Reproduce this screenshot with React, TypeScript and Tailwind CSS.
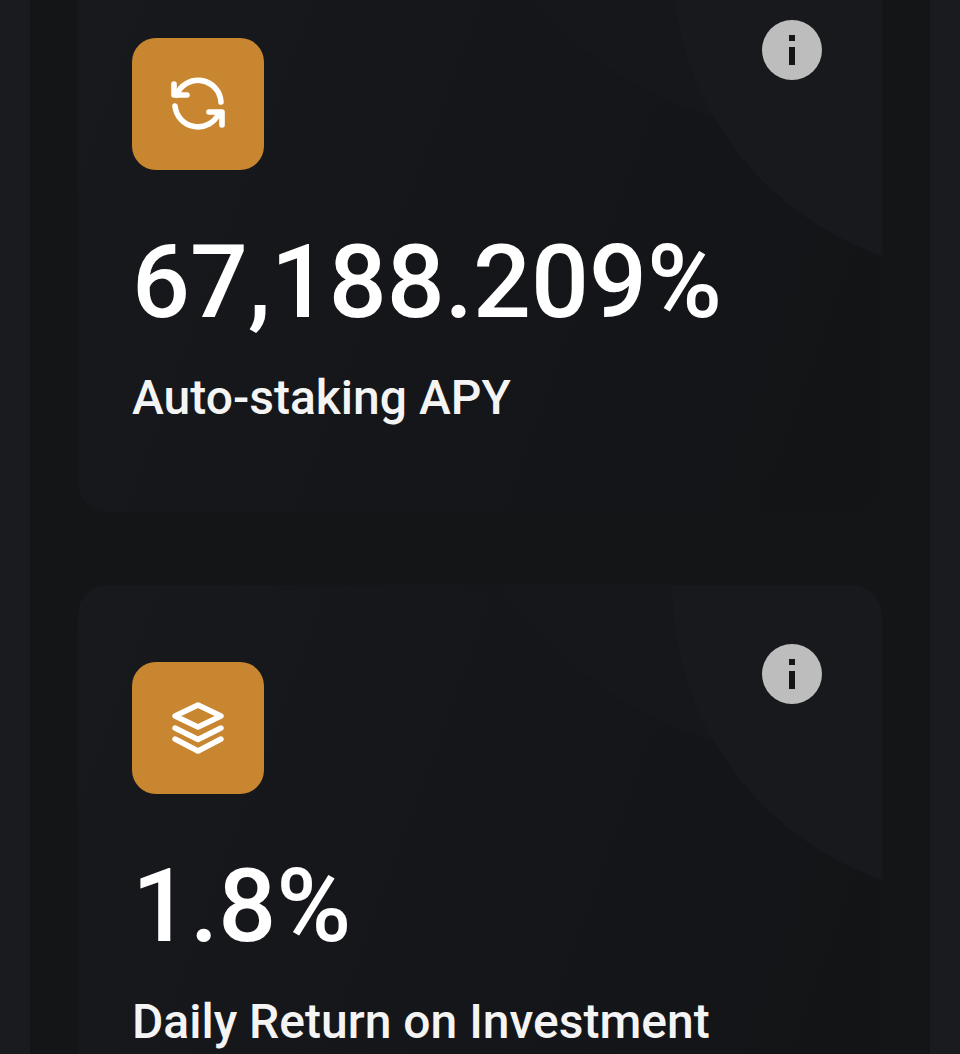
import React from 'react';

const font = { fontFamily: 'Roboto, sans-serif' };

const RefreshIcon = () => (
  <svg width="60" height="60" viewBox="0 0 60 60" fill="none" stroke="#fff" strokeWidth="5.6" strokeLinecap="round" strokeLinejoin="round">
    <path d="M8.6 21 A23 23 0 0 1 53 28" />
    <path d="M6 10 V21 H19" />
    <path d="M7 32 A23 23 0 0 0 51 39" />
    <path d="M54 51 V38 H41" />
  </svg>
);

const LayersIcon = () => (
  <svg width="60" height="60" viewBox="0 0 60 60" fill="none" stroke="#fff" strokeWidth="5.4" strokeLinecap="round" strokeLinejoin="round">
    <path d="M30 7 L53 18 L30 29 L7 18 Z" />
    <path d="M7 30 L30 41.5 L53 30" />
    <path d="M7 41 L30 53 L53 41" />
  </svg>
);

const InfoDot = () => (
  <div className="absolute top-[59px] right-[60px] w-[60px] h-[60px] rounded-full bg-[#bdbdbe] flex flex-col items-center justify-center gap-[6px]">
    <div className="w-[6px] h-[6px] bg-[#141517]" />
    <div className="w-[6px] h-[18px] bg-[#141517]" />
  </div>
);

interface StatCardProps {
  icon: React.ReactNode;
  value: string;
  label: string;
  className?: string;
}

const StatCard: React.FC<StatCardProps> = ({ icon, value, label, className }) => (
  <div className={`relative h-[551px] shrink-0 rounded-[30px] overflow-hidden bg-linear-110 from-[#18191d] via-[#15161a] to-[#131416] pt-[77px] px-[54px] ${className ?? ''}`}>
    {/* circulos decorativos */}
    <div className="absolute left-[357px] top-[-598px] w-[768px] h-[768px] rounded-full bg-[#16171a]" />
    <div className="absolute left-[594px] top-[-312px] w-[624px] h-[624px] rounded-full bg-[#18191d]" />
    <InfoDot />
    <div className="relative">
      <div className="w-[132px] h-[132px] rounded-[24px] bg-[#c98630] flex items-center justify-center">{icon}</div>
      <div className="mt-[48px] text-[102px] leading-[128px] font-medium text-white">{value}</div>
      <div className="mt-[22px] text-[48px] leading-[60px] font-medium text-[#f4f4f4]">{label}</div>
    </div>
  </div>
);

export default function App() {
  return (
    <div style={font} className="h-[1054px] overflow-hidden bg-[#1a1b1f] px-[30px]">
      <div className="h-full bg-[#141517] px-[48px] flex flex-col gap-[73px]">
        <StatCard className="mt-[-39px]" icon={<RefreshIcon />} value="67,188.209%" label="Auto-staking APY" />
        <StatCard icon={<LayersIcon />} value="1.8%" label="Daily Return on Investment" />
      </div>
    </div>
  );
}
